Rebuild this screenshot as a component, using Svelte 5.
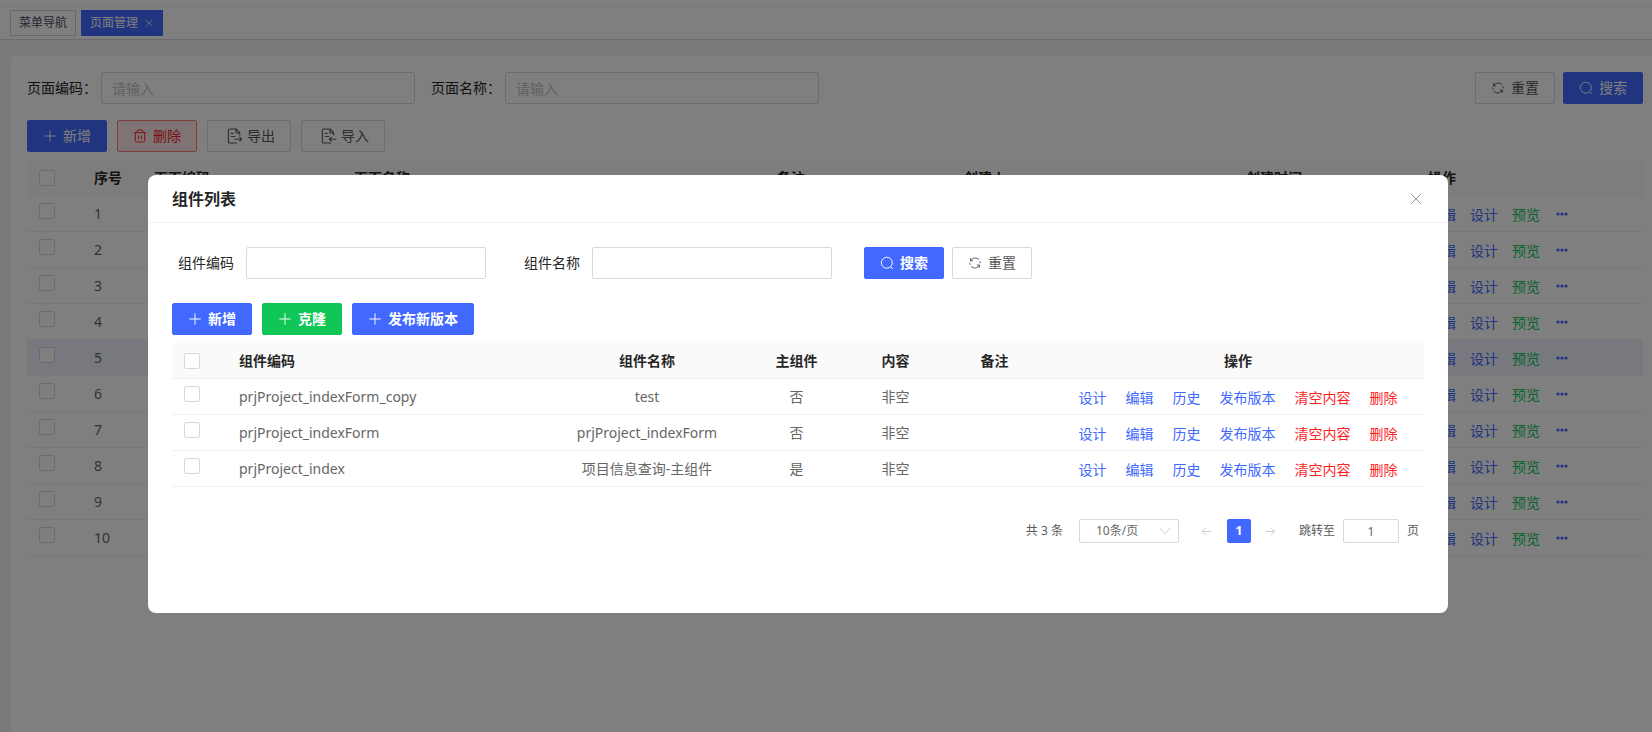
<script lang="ts">
  const pageRows = Array.from({ length: 10 }, (_, i) => i + 1);
  const activeRow = 5;

  const components = [
    { code: 'prjProject_indexForm_copy', name: 'test', main: '否', content: '非空' },
    { code: 'prjProject_indexForm', name: 'prjProject_indexForm', main: '否', content: '非空' },
    { code: 'prjProject_index', name: '项目信息查询-主组件', main: '是', content: '非空' },
  ];

  const rowActions = [
    { label: '设计', tone: 'primary' },
    { label: '编辑', tone: 'primary' },
    { label: '历史', tone: 'primary' },
    { label: '发布版本', tone: 'primary' },
    { label: '清空内容', tone: 'danger' },
    { label: '删除', tone: 'danger' },
  ];

  // stroke icons on a 16x16 grid
  const icons: Record<string, string> = {
    plus: 'M8 1.5v13M1.5 8h13',
    close: 'M2.5 2.5l11 11M13.5 2.5l-11 11',
    search: 'M7.8 1.4a6.3 6.3 0 1 1 0 12.6a6.3 6.3 0 0 1 0-12.6M12.2 12.4l2.4 2.4',
    refresh:
      'M2.8 2.6v3h3M3 5.2A6 6 0 0 1 12.6 4.2M13.6 6a6 6 0 0 1 .3 2.4M13.2 13.4v-3h-3M13 10.8A6 6 0 0 1 3.4 11.8M2.4 10a6 6 0 0 1-.3-2.4',
    trash: 'M1.2 4.2h13.6M2.6 4.2v9.3a1.3 1.3 0 0 0 1.3 1.3h8.2a1.3 1.3 0 0 0 1.3-1.3V4.2M4.8 4V2.2a1 1 0 0 1 1-1h4.4a1 1 0 0 1 1 1V4M6.4 7.5v4.2M9.6 7.5v4.2',
    export:
      'M12.7 7.5V4.8L9.3 1H2.4a1 1 0 0 0-1 1v12a1 1 0 0 0 1 1H10M9 1.2V5h3.6M3.8 5.4h2.6M3.8 8.5h4.4M7.6 11.2h7M12.4 9l2.2 2.2l-2.2 2.2',
    import:
      'M12.7 7.5V4.8L9.3 1H2.4a1 1 0 0 0-1 1v12a1 1 0 0 0 1 1H10M9 1.2V5h3.6M3.8 5.4h2.6M3.8 8.5h4.4M8.4 11.2h6.8M10.6 9l-2.2 2.2l2.2 2.2',
    down: 'M1.5 4.5L8 11.5L14.5 4.5',
    prev: 'M15 8H2M7.5 2.5L2 8l5.5 5.5',
    next: 'M1 8h13M8.5 2.5L14 8l-5.5 5.5',
  };
</script>

{#snippet icon(name: string, size = 14)}
  <svg class="icon" viewBox="0 0 16 16" width={size} height={size} aria-hidden="true">
    <path d={icons[name]} />
  </svg>
{/snippet}

<div class="page">
  <div class="topbar"></div>
  <nav class="tabs">
    <a class="tab" href="#menu">菜单导航</a>
    <a class="tab tab--active" href="#pages">页面管理 {@render icon('close', 10)}</a>
  </nav>

  <main class="main">
    <section class="card">
      <form class="query">
        <label class="query__label" for="page-code">页面编码：</label>
        <input class="input query__input" id="page-code" placeholder="请输入" />
        <label class="query__label" for="page-name">页面名称：</label>
        <input class="input query__input" id="page-name" placeholder="请输入" />
        <div class="query__actions">
          <button type="button" class="btn">{@render icon('refresh')}重置</button>
          <button type="button" class="btn btn--primary">{@render icon('search')}搜索</button>
        </div>
      </form>

      <div class="toolbar">
        <button type="button" class="btn btn--primary">{@render icon('plus')}新增</button>
        <button type="button" class="btn btn--danger">{@render icon('trash')}删除</button>
        <button type="button" class="btn btn--file">{@render icon('export', 16)}导出</button>
        <button type="button" class="btn btn--file">{@render icon('import', 16)}导入</button>
      </div>

      <table class="table">
        <colgroup>
          <col class="w-check" />
          <col class="w-index" />
          <col class="w-code" />
          <col />
          <col class="w-note" />
          <col class="w-user" />
          <col class="w-time" />
          <col class="w-ops" />
        </colgroup>
        <thead>
          <tr>
            <th><input type="checkbox" class="check" aria-label="全选" /></th>
            <th>序号</th>
            <th>页面编码</th>
            <th>页面名称</th>
            <th>备注</th>
            <th>创建人</th>
            <th>创建时间</th>
            <th>操作</th>
          </tr>
        </thead>
        <tbody>
          {#each pageRows as n}
            <tr class:active={n === activeRow}>
              <td><input type="checkbox" class="check" aria-label={`${n}`} /></td>
              <td>{n}</td>
              <td></td>
              <td></td>
              <td></td>
              <td></td>
              <td></td>
              <td>
                <div class="links links--tight">
                  <a class="link" href="#edit">编辑</a>
                  <a class="link" href="#design">设计</a>
                  <a class="link link--success" href="#preview">预览</a>
                  <button type="button" class="more" aria-label="更多">
                    <svg viewBox="0 0 12 4" width="12" height="4" aria-hidden="true">
                      <circle cx="2" cy="2" r="1.6" />
                      <circle cx="6" cy="2" r="1.6" />
                      <circle cx="10" cy="2" r="1.6" />
                    </svg>
                  </button>
                </div>
              </td>
            </tr>
          {/each}
        </tbody>
      </table>
    </section>
  </main>
</div>

<div class="overlay">
  <div class="modal" role="dialog" aria-modal="true" aria-labelledby="modal-title">
    <header class="modal__header">
      <h2 class="modal__title" id="modal-title">组件列表</h2>
      <button type="button" class="modal__close" aria-label="关闭">{@render icon('close')}</button>
    </header>

    <div class="modal__body">
      <form class="filter">
        <div class="filter__item">
          <label for="comp-code">组件编码</label>
          <input class="input filter__input" id="comp-code" />
        </div>
        <div class="filter__item">
          <label for="comp-name">组件名称</label>
          <input class="input filter__input" id="comp-name" />
        </div>
        <div class="filter__actions">
          <button type="button" class="btn btn--primary btn--strong">{@render icon('search')}搜索</button>
          <button type="button" class="btn">{@render icon('refresh')}重置</button>
        </div>
      </form>

      <div class="toolbar toolbar--modal">
        <button type="button" class="btn btn--primary btn--strong">{@render icon('plus')}新增</button>
        <button type="button" class="btn btn--success btn--strong">{@render icon('plus')}克隆</button>
        <button type="button" class="btn btn--primary btn--strong">{@render icon('plus')}发布新版本</button>
      </div>

      <table class="table">
        <colgroup>
          <col class="m-check" />
          <col />
          <col class="m-name" />
          <col class="m-flag" />
          <col class="m-flag" />
          <col class="m-flag" />
          <col class="m-ops" />
        </colgroup>
        <thead>
          <tr>
            <th><input type="checkbox" class="check" aria-label="全选" /></th>
            <th>组件编码</th>
            <th class="center">组件名称</th>
            <th class="center">主组件</th>
            <th class="center">内容</th>
            <th class="center">备注</th>
            <th class="center ops">操作</th>
          </tr>
        </thead>
        <tbody>
          {#each components as row}
            <tr>
              <td><input type="checkbox" class="check" aria-label={row.code} /></td>
              <td>{row.code}</td>
              <td class="center">{row.name}</td>
              <td class="center">{row.main}</td>
              <td class="center">{row.content}</td>
              <td></td>
              <td class="ops">
                <div class="links">
                  {#each rowActions as action}
                    <a class="link" class:link--danger={action.tone === 'danger'} href="#action">{action.label}</a>
                  {/each}
                </div>
              </td>
            </tr>
          {/each}
        </tbody>
      </table>

      <div class="pager">
        <span class="pager__total">共 {components.length} 条</span>
        <div class="pager__size">
          <select class="input pager__select" aria-label="每页条数">
            <option>10条/页</option>
          </select>
          <span class="pager__arrow">{@render icon('down', 12)}</span>
        </div>
        <div class="pager__pages">
          <button type="button" class="pager__btn" aria-label="上一页">{@render icon('prev', 11)}</button>
          <button type="button" class="pager__btn pager__btn--current">1</button>
          <button type="button" class="pager__btn" aria-label="下一页">{@render icon('next', 11)}</button>
        </div>
        <label for="jump">跳转至</label>
        <input class="input pager__jump" id="jump" value="1" />
        <span>页</span>
      </div>
    </div>
  </div>
</div>

<style>
  :global(body) {
    font-family: 'Noto Sans', 'Noto Sans CJK SC', sans-serif;
    font-size: 14px;
    line-height: 20px;
    color: #262626;
    background: #f5f5f5;
  }

  .page {
    display: flex;
    flex-direction: column;
    min-height: 100vh;
  }

  .topbar {
    height: 6px;
    background: #fff;
    border-bottom: 1px solid #f0f0f0;
  }

  .tabs {
    display: flex;
    gap: 5px;
    padding: 3px 10px;
    background: #fff;
    border-bottom: 1px solid #d9d9d9;
  }

  .tab {
    display: flex;
    align-items: center;
    gap: 6px;
    height: 24px;
    padding: 0 8px;
    border: 1px solid #d0d0d0;
    font-size: 12px;
    color: #495060;
    text-decoration: none;
  }

  .tab--active {
    background: #4168ff;
    border-color: #4168ff;
    color: #fff;
  }

  .main {
    flex: 1;
    display: flex;
    padding: 16px 0 0 11px;
  }

  .card {
    flex: 1;
    padding: 16px 9px 16px 16px;
    background: #fff;
    border-radius: 4px 0 0 0;
  }

  .query {
    display: flex;
    align-items: center;
  }

  .query__label {
    width: 74px;
    white-space: nowrap;
  }

  .query__input {
    flex: 0 1 314px;
    margin-right: 16px;
  }

  .query__actions {
    display: flex;
    gap: 8px;
    margin-left: auto;
  }

  .input {
    box-sizing: border-box;
    height: 32px;
    min-width: 0;
    padding: 0 10px;
    border: 1px solid #d9d9d9;
    border-radius: 2px;
    background: #fff;
    font: inherit;
    color: #666;
    outline: none;
  }

  .input::placeholder {
    color: #bfbfbf;
    opacity: 1;
  }

  .toolbar {
    display: flex;
    gap: 10px;
    margin: 16px 0 8px;
  }

  .toolbar--modal {
    margin-top: 24px;
  }

  .btn {
    display: inline-flex;
    align-items: center;
    gap: 6px;
    box-sizing: border-box;
    height: 32px;
    padding: 0 15px;
    border: 1px solid #d9d9d9;
    border-radius: 2px;
    background: #fff;
    color: #595959;
    font: inherit;
    white-space: nowrap;
    cursor: pointer;
  }

  .btn--file {
    gap: 4px;
    padding-left: 19px;
  }

  .btn--primary {
    background: #4168ff;
    border-color: #4168ff;
    color: #fff;
  }

  .btn--success {
    background: #0fc656;
    border-color: #0fc656;
    color: #fff;
  }

  .btn--danger {
    background: #ffe6e6;
    border-color: #ff7875;
    color: #f5222d;
  }

  .btn--strong {
    font-weight: 600;
  }

  .icon {
    display: block;
    flex: none;
    fill: none;
    stroke: currentColor;
    stroke-width: 1.1;
  }

  .table {
    width: 100%;
    table-layout: fixed;
    border-collapse: separate;
    border-spacing: 0;
  }

  .table th,
  .table td {
    box-sizing: border-box;
    height: 36px;
    padding: 0 12px;
    border-bottom: 1px solid #f0f0f0;
    text-align: left;
    white-space: nowrap;
  }

  .table th {
    background: #fafafa;
    font-weight: 600;
  }

  .table td {
    color: #666;
  }

  .table .active td {
    background: #f0f3ff;
  }

  .table .center {
    text-align: center;
  }

  .table .ops {
    padding-left: 20px;
  }

  .w-check {
    width: 55px;
  }

  .w-index {
    width: 60px;
  }

  .w-code {
    width: 200px;
  }

  .w-note {
    width: 187px;
  }

  .w-user {
    width: 282px;
  }

  .w-time {
    width: 182px;
  }

  .w-ops {
    width: 227px;
  }

  .m-check {
    width: 55px;
  }

  .m-name {
    width: 200px;
  }

  .m-flag {
    width: 99px;
  }

  .m-ops {
    width: 380px;
  }

  .check {
    appearance: none;
    display: block;
    box-sizing: border-box;
    width: 16px;
    height: 16px;
    margin: 0;
    border: 1px solid #d9d9d9;
    border-radius: 2px;
    background: #fff;
  }

  td .check {
    margin-bottom: 6px;
  }

  .links {
    display: flex;
    align-items: center;
    justify-content: center;
    gap: 19px;
    padding-top: 2px;
  }

  .links--tight {
    justify-content: flex-start;
    gap: 14px;
  }

  .link {
    color: #4168ff;
    text-decoration: none;
  }

  .link--success {
    color: #0fc656;
  }

  .link--danger {
    color: #ff1f1f;
  }

  .more {
    display: flex;
    padding: 0 0 2px 2px;
    border: 0;
    background: none;
  }

  .more svg {
    fill: #4168ff;
  }

  .overlay {
    position: fixed;
    inset: 0;
    display: flex;
    align-items: flex-start;
    padding: 175px 204px 0 148px;
    background: rgba(0, 0, 0, 0.5);
  }

  .modal {
    flex: 1;
    background: #fff;
    border-radius: 8px;
  }

  .modal__header {
    display: flex;
    align-items: center;
    justify-content: space-between;
    height: 47px;
    padding: 0 24px;
    border-bottom: 1px solid #f0f0f0;
  }

  .modal__title {
    margin: 0;
    font-size: 16px;
    font-weight: 600;
    line-height: 24px;
  }

  .modal__close {
    display: flex;
    padding: 1px;
    border: 0;
    background: none;
    color: #8c8c8c;
  }

  .modal__body {
    padding: 24px 24px 70px;
  }

  .filter {
    display: flex;
    align-items: center;
    padding-left: 6px;
  }

  .filter__item {
    display: flex;
    align-items: center;
    gap: 12px;
    margin-right: 38px;
  }

  .filter__input {
    width: 240px;
  }

  .filter__item + .filter__actions {
    margin-left: -6px;
  }

  .filter__actions {
    display: flex;
    gap: 8px;
  }

  .pager {
    display: flex;
    align-items: center;
    justify-content: flex-end;
    gap: 8px;
    margin-top: 32px;
    padding-right: 5px;
    font-size: 12px;
    color: #595959;
  }

  .pager__total {
    margin-right: 8px;
  }

  .pager__size {
    position: relative;
  }

  .pager__select {
    appearance: none;
    width: 100px;
    height: 24px;
    padding: 0 24px 0 16px;
  }

  .pager__arrow {
    position: absolute;
    top: 6px;
    right: 8px;
    color: #bfbfbf;
    pointer-events: none;
  }

  .pager__pages {
    display: flex;
    gap: 8px;
    margin: 0 8px;
  }

  .pager__btn {
    display: flex;
    align-items: center;
    justify-content: center;
    width: 24px;
    height: 24px;
    padding: 0;
    border: 0;
    border-radius: 2px;
    background: none;
    color: #bfbfbf;
    font: inherit;
  }

  .pager__btn--current {
    background: #4168ff;
    color: #fff;
    font-weight: 700;
  }

  .pager__jump {
    width: 56px;
    height: 24px;
    text-align: center;
  }
</style>
